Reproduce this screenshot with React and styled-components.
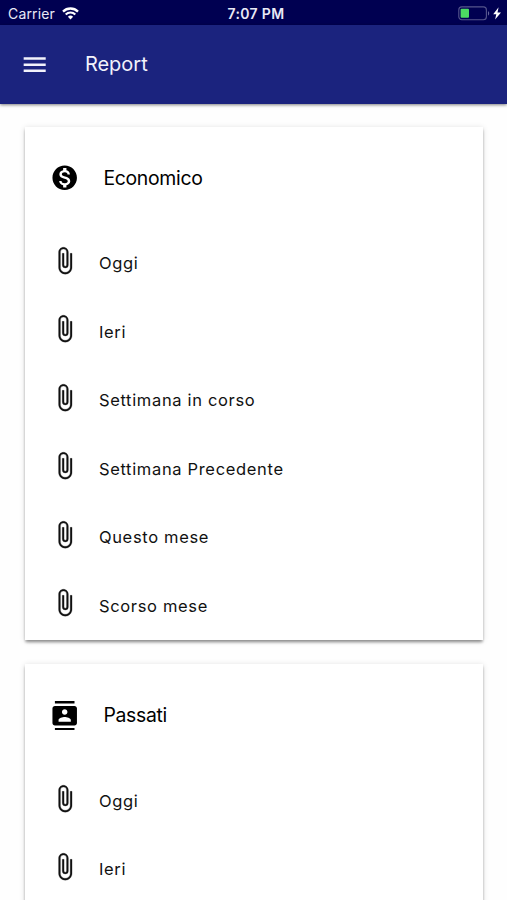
import styled, { createGlobalStyle } from "styled-components";
import {
  MdAttachFile,
  MdContacts,
  MdMenu,
  MdMonetizationOn,
} from "react-icons/md";

const GlobalStyle = createGlobalStyle`
  * {
    box-sizing: border-box;
  }

  body {
    margin: 0;
    background-color: #fefefe;
    font-family: Inter, "Liberation Sans", sans-serif;
    color: #111;
  }
`;

const Container = styled.div`
  height: 900px;
  overflow: hidden;
`;

const StatusBar = styled.div`
  height: 25px;
  padding: 2px 5px 0 8px;
  display: grid;
  grid-template-columns: 1fr auto 1fr;
  align-items: center;
  background-color: #000051;
  color: #e9e9f6;
`;

const Carrier = styled.div`
  display: flex;
  align-items: center;
  gap: 7px;
  font-size: 14px;
  letter-spacing: 0.15px;
`;

const Clock = styled.div`
  font-size: 14px;
  font-weight: 600;
  letter-spacing: 0.35px;
  margin-left: 2px;
`;

const Power = styled.div`
  display: flex;
  align-items: center;
  justify-content: flex-end;
`;

const AppBar = styled.header`
  height: 78.5px;
  padding: 0 20.3px;
  display: flex;
  align-items: center;
  gap: 35.2px;
  background-color: #1b237e;
  color: #f2f2fb;
  box-shadow: 0 1px 3px rgba(0, 0, 0, 0.5);
`;

const Title = styled.h1`
  margin: 0;
  font-size: 20px;
  font-weight: 400;
  letter-spacing: 0;
`;

const Reports = styled.main`
  padding: 23px 24.5px;
  display: flex;
  flex-direction: column;
  gap: 24.5px;
`;

const Card = styled.section`
  background-color: white;
  box-shadow: 0 3px 3px -1px rgba(0, 0, 0, 0.3),
    0 2.4px 2.4px rgba(0, 0, 0, 0.14), 0 1.2px 6px rgba(0, 0, 0, 0.14);
`;

const CardHeader = styled.div`
  height: 102.3px;
  padding: 0 25px;
  display: flex;
  align-items: center;
  gap: 24.5px;
  color: black;
`;

const CardTitle = styled.h2`
  margin: 0;
  font-size: 19.4px;
  font-weight: 400;
  letter-spacing: -0.3px;
`;

const List = styled.ul`
  margin: 0;
  padding: 0;
  list-style: none;
`;

const Item = styled.li`
  height: 68.5px;
  padding: 0 25px 5px;
  display: flex;
  align-items: center;
  gap: 20px;
`;

const ClipIcon = styled(MdAttachFile)`
  stroke-width: 0.2px;

  path[fill="none"] {
    stroke: none;
  }
`;

const Label = styled.span`
  padding-top: 5px;
  font-size: 16.5px;
  letter-spacing: 0.67px;
`;

const reports = [
  {
    title: "Economico",
    icon: MdMonetizationOn,
    items: [
      "Oggi",
      "Ieri",
      "Settimana in corso",
      "Settimana Precedente",
      "Questo mese",
      "Scorso mese",
    ],
  },
  {
    title: "Passati",
    icon: MdContacts,
    items: ["Oggi", "Ieri"],
  },
];

const WifiIcon = () => (
  <svg width="17" height="13" viewBox="0 0 17 13" fill="none">
    <path d="M1 4.6a10.6 10.6 0 0 1 15 0" stroke="white" strokeWidth="2.3" />
    <path d="M3.7 7.5a6.8 6.8 0 0 1 9.6 0" stroke="white" strokeWidth="2.1" />
    <path d="M8.5 12.5 5.9 9.8a3.7 3.7 0 0 1 5.2 0z" fill="white" />
  </svg>
);

const BatteryIcon = () => (
  <svg width="44" height="15" viewBox="0 0 44 15">
    <rect
      x="0.8"
      y="0.9"
      width="27.6"
      height="12.8"
      rx="3"
      fill="none"
      stroke="#55558c"
      strokeWidth="1.1"
    />
    <rect x="2.6" y="2.8" width="8.4" height="9" rx="1" fill="#4cdb62" />
    <path d="M30 5.2c1.6.5 1.6 3.7 0 4.2z" fill="#64649c" />
    <path d="M40.6 1.2 35.2 8.2h3.1l-1.2 5.4 5.9-7h-3.5z" fill="white" />
  </svg>
);

const App = () => {
  return (
    <>
      <GlobalStyle />
      <Container>
        <StatusBar>
          <Carrier>
            Carrier
            <WifiIcon />
          </Carrier>
          <Clock>7:07 PM</Clock>
          <Power>
            <BatteryIcon />
          </Power>
        </StatusBar>
        <AppBar>
          <MdMenu size={29.4} />
          <Title>Report</Title>
        </AppBar>
        <Reports>
          {reports.map(({ title, icon: Icon, items }) => (
            <Card key={title}>
              <CardHeader>
                <Icon size={29.4} />
                <CardTitle>{title}</CardTitle>
              </CardHeader>
              <List>
                {items.map((item) => (
                  <Item key={item}>
                    <ClipIcon size={29.4} />
                    <Label>{item}</Label>
                  </Item>
                ))}
              </List>
            </Card>
          ))}
        </Reports>
      </Container>
    </>
  );
};

export default App;
